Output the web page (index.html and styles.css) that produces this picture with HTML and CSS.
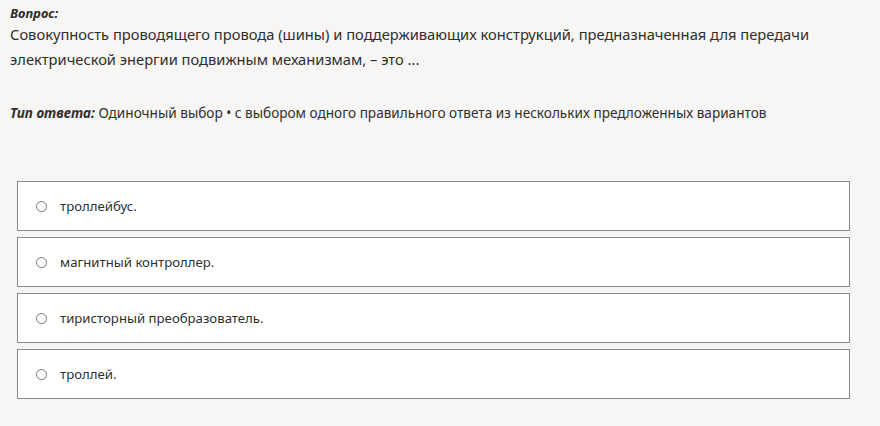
FILE: index.html
```html
<!DOCTYPE html>
<html lang="ru">
<head>
    <meta charset="UTF-8">
    <meta name="viewport" content="width=device-width, initial-scale=1.0">
    <title>Вопрос</title>
    <link rel="stylesheet" href="styles.css">
</head>
<body>

<div class="question">
    <div class="label">Вопрос:</div>
    <p class="text">Совокупность проводящего провода (шины) и поддерживающих конструкций, предназначенная для передачи электрической энергии подвижным механизмам, – это ...</p>
</div>

<div class="answer-type">
    <span class="label">Тип ответа:</span> Одиночный выбор • с выбором одного правильного ответа из нескольких предложенных вариантов
</div>

<div class="options">
    <label class="option"><span class="radio"></span>троллейбус.</label>
    <label class="option"><span class="radio"></span>магнитный контроллер.</label>
    <label class="option"><span class="radio"></span>тиристорный преобразователь.</label>
    <label class="option"><span class="radio"></span>троллей.</label>
</div>

</body>
</html>
```

FILE: styles.css
```css
body {
    margin: 0;
    padding: 4px 10px 0;
    background-color: #f7f6f4;
    color: #2f2f2f;
    font-family: "Noto Sans", "Open Sans", sans-serif;
}
.label {
    font-weight: bold;
    font-style: italic;
    font-size: 13px;
}
.question .label {
    line-height: 18px;
}
.text {
    margin: 0;
    width: 850px;
    font-size: 14.7px;
    line-height: 25px;
}
.answer-type {
    margin-top: 32px;
    font-size: 13.6px;
    line-height: 18px;
}
.answer-type .label {
    font-size: 13.6px;
}
.options {
    margin: 59px 20px 0 7px;
    display: flex;
    flex-direction: column;
    gap: 6px;
}
.option {
    display: flex;
    align-items: center;
    height: 48px;
    padding-left: 18px;
    background-color: #fff;
    border: 1px solid #8a8a8a;
    font-size: 13.2px;
}
.radio {
    width: 9px;
    height: 9px;
    border: 1px solid #777;
    border-radius: 50%;
    margin-right: 13px;
}
```
